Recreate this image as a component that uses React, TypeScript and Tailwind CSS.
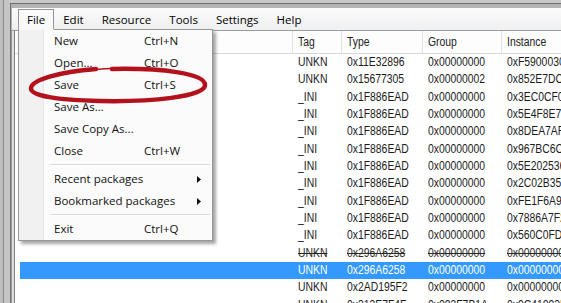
import React from "react";

type Row = { tag: string; type: string; group: string; inst: string; state?: "strike" | "selected" };

const rows: Row[] = [
  { tag: "UNKN", type: "0x11E32896", group: "0x00000000", inst: "0xF5900030" },
  { tag: "UNKN", type: "0x15677305", group: "0x00000002", inst: "0x852E7DC4" },
  { tag: "_INI", type: "0x1F886EAD", group: "0x00000000", inst: "0x3EC0CF01" },
  { tag: "_INI", type: "0x1F886EAD", group: "0x00000000", inst: "0x5E4F8E72" },
  { tag: "_INI", type: "0x1F886EAD", group: "0x00000000", inst: "0x8DEA7AF0" },
  { tag: "_INI", type: "0x1F886EAD", group: "0x00000000", inst: "0x967BC6C1" },
  { tag: "_INI", type: "0x1F886EAD", group: "0x00000000", inst: "0x5E202536" },
  { tag: "_INI", type: "0x1F886EAD", group: "0x00000000", inst: "0x2C02B35A" },
  { tag: "_INI", type: "0x1F886EAD", group: "0x00000000", inst: "0xFE1F6A94" },
  { tag: "_INI", type: "0x1F886EAD", group: "0x00000000", inst: "0x7886A7F2" },
  { tag: "_INI", type: "0x1F886EAD", group: "0x00000000", inst: "0x560C0FD3" },
  { tag: "UNKN", type: "0x296A6258", group: "0x00000000", inst: "0x00000000", state: "strike" },
  { tag: "UNKN", type: "0x296A6258", group: "0x00000000", inst: "0x00000000", state: "selected" },
  { tag: "UNKN", type: "0x2AD195F2", group: "0x00000000", inst: "0x00000000" },
  { tag: "UNKN", type: "0x313E7F4F", group: "0x093F7B1A", inst: "0x9C41093E" },
];

const menuBar = ["File", "Edit", "Resource", "Tools", "Settings", "Help"];

type MenuItem = { label?: string; shortcut?: string; sub?: boolean; sep?: boolean };

const fileMenu: MenuItem[] = [
  { label: "New", shortcut: "Ctrl+N" },
  { label: "Open...", shortcut: "Ctrl+O" },
  { label: "Save", shortcut: "Ctrl+S" },
  { label: "Save As..." },
  { label: "Save Copy As..." },
  { label: "Close", shortcut: "Ctrl+W" },
  { sep: true },
  { label: "Recent packages", sub: true },
  { label: "Bookmarked packages", sub: true },
  { sep: true },
  { label: "Exit", shortcut: "Ctrl+Q" },
];

const cols = "grid grid-cols-[272px_49px_81px_79px_1fr]";

// the list font is a narrow sans; squeeze Liberation Sans to match
function Narrow({ children, strike }: { children: React.ReactNode; strike?: boolean }) {
  return (
    <span className={strike ? "inline-block whitespace-nowrap scale-x-[0.83] origin-left line-through" : "inline-block whitespace-nowrap scale-x-[0.83] origin-left"}>
      {children}
    </span>
  );
}

function FileMenu() {
  return (
    <div className="absolute left-[18px] top-[29px] w-[195px] border border-[#979797] bg-[#fbfbfb] shadow-[3px_3px_3px_rgba(0,0,0,0.35)] z-10">
      <div className="absolute -top-px left-0 w-[35px] h-px bg-[#f8f8f8]" />
      <div className="absolute top-0 bottom-0 left-0 w-[25px] bg-[#f1f1f1] border-r border-[#e6e6e6]" />
      <div className="relative flex flex-col">
        {fileMenu.map((m, i) =>
          m.sep ? (
            <div key={i} className="h-[6px] flex flex-col justify-center pl-[31px] pr-[2px]">
              <div className="h-px bg-[#d9d9d9]" />
              <div className="h-px bg-white" />
            </div>
          ) : (
            <div key={i} className="h-[22px] flex items-center pl-[35px] text-[#111] whitespace-nowrap">
              <span className="min-w-[90px]">{m.label}</span>
              {m.shortcut && <span>{m.shortcut}</span>}
              {m.sub && (
                <svg className="ml-auto mr-[11px]" width="4" height="7" viewBox="0 0 4 7">
                  <path d="M0 0 L4 3.5 L0 7 Z" fill="#111" />
                </svg>
              )}
            </div>
          )
        )}
      </div>
    </div>
  );
}

export default function App() {
  return (
    <div
      className="relative w-[561px] h-[303px] overflow-hidden bg-[#c8c8c8] flex text-[11.5px]"
      style={{ fontFamily: '"Open Sans", "Noto Sans", sans-serif' }}
    >
      <div className="w-[3px] bg-[#bebebe]" />
      <div className="w-px bg-[#8a8a8a]" />
      <div className="w-[6px] bg-[#c6c6c6]" />
      <div className="flex-1 flex flex-col pt-[3px]">
        <div className="flex-1 flex flex-col border-l border-t border-[#6f6f6f] bg-[#b3b3b3] pt-[4px]">
          {/* menu bar */}
          <div className="h-[22px] ml-px flex items-start pt-px pl-[6px] bg-gradient-to-b from-[#fbfbfb] to-[#eff0f1]">
            {menuBar.map((m, i) => (
              <div
                key={m}
                className={
                  i === 0
                    ? "h-[21px] px-[8px] flex items-center border border-b-0 border-[#959595] bg-[#f9f9f9]"
                    : "h-[21px] px-[8px] flex items-center border border-transparent"
                }
              >
                {m}
              </div>
            ))}
          </div>
          <div className="h-px bg-[#9c9c9c]" />
          {/* body */}
          <div className="flex-1 flex">
            <div className="w-px bg-[#9d9d9d]" />
            <div className="w-[2px] bg-[#dcdcdc]" />
            <div className="w-px bg-[#808080]" />
            <div
              className="flex-1 min-w-0 bg-white text-[12.5px] text-[#1b1b1b]"
              style={{ fontFamily: '"Liberation Sans", Arial, sans-serif' }}
            >
              <div className="grid grid-cols-[277px_49px_81px_79px_1fr] h-[23px] bg-[#fdfdfd] border-b border-[#d8d8d8]">
                <div />
                {["Tag", "Type", "Group", "Instance"].map((h) => (
                  <div key={h} className="border-l border-[#e2e2e2] pl-[5px] flex items-center overflow-hidden text-[#222]">
                    <Narrow>{h}</Narrow>
                  </div>
                ))}
              </div>
              {rows.map((r, i) => {
                const s = r.state === "strike";
                return (
                  <div
                    key={i}
                    className={
                      r.state === "selected"
                        ? `${cols} ml-[5px] h-[17.33px] leading-[17.33px] bg-[#3399ff] text-white`
                        : s
                        ? `${cols} ml-[5px] h-[17.33px] leading-[17.33px] text-[#2a2a2a]`
                        : `${cols} ml-[5px] h-[17.33px] leading-[17.33px]`
                    }
                  >
                    <div />
                    <div className="pl-[6px] overflow-hidden"><Narrow strike={s}>{r.tag}</Narrow></div>
                    <div className="pl-[6px] overflow-hidden"><Narrow strike={s}>{r.type}</Narrow></div>
                    <div className="pl-[6px] overflow-hidden"><Narrow strike={s}>{r.group}</Narrow></div>
                    <div className="pl-[6px] overflow-hidden"><Narrow strike={s}>{r.inst}</Narrow></div>
                  </div>
                );
              })}
            </div>
          </div>
        </div>
      </div>

      <FileMenu />

      {/* hand drawn annotation */}
      <svg className="absolute left-0 top-0 pointer-events-none z-20" width="561" height="303" viewBox="0 0 561 303">
        <path
          d="M112 69 C160 68 205 73 205 85 C205 97 150 102 100 101 C58 100 30 96 31 88 C32 80 58 72 96 69"
          fill="none"
          stroke="#b3121c"
          strokeWidth="4.5"
          strokeLinecap="round"
        />
        <path d="M88 71 C100 68 112 68 124 69" fill="none" stroke="#b3121c" strokeWidth="1.6" strokeLinecap="round" />
      </svg>
    </div>
  );
}
